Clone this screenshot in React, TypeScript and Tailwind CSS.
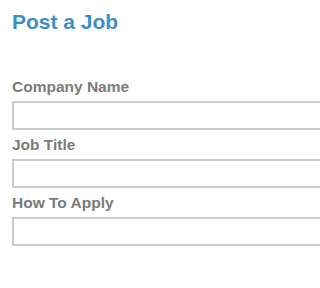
import React from 'react';

const fields = ['Company Name', 'Job Title', 'How To Apply'];

const Field: React.FC<{ label: string }> = ({ label }) => (
  <div className="mb-[6px]">
    <label className="block text-[15.5px] leading-[18px] font-bold text-[#7b7b7b] mb-[5px]">{label}</label>
    <input type="text" className="block w-[400px] h-[29px] border-2 border-[#cbcbcb] bg-white outline-none" />
  </div>
);

export default function App() {
  return (
    <div className="w-full min-h-[288px] overflow-hidden bg-white font-['Liberation_Sans',Arial,sans-serif]">
      <div className="pl-[12px] pt-[10px]">
        <h1 className="text-[21px] leading-[24px] font-bold text-[#3a8fc9]">Post a Job</h1>
        <form className="mt-[44px]">
          {fields.map((f) => (
            <Field key={f} label={f} />
          ))}
        </form>
      </div>
    </div>
  );
}
